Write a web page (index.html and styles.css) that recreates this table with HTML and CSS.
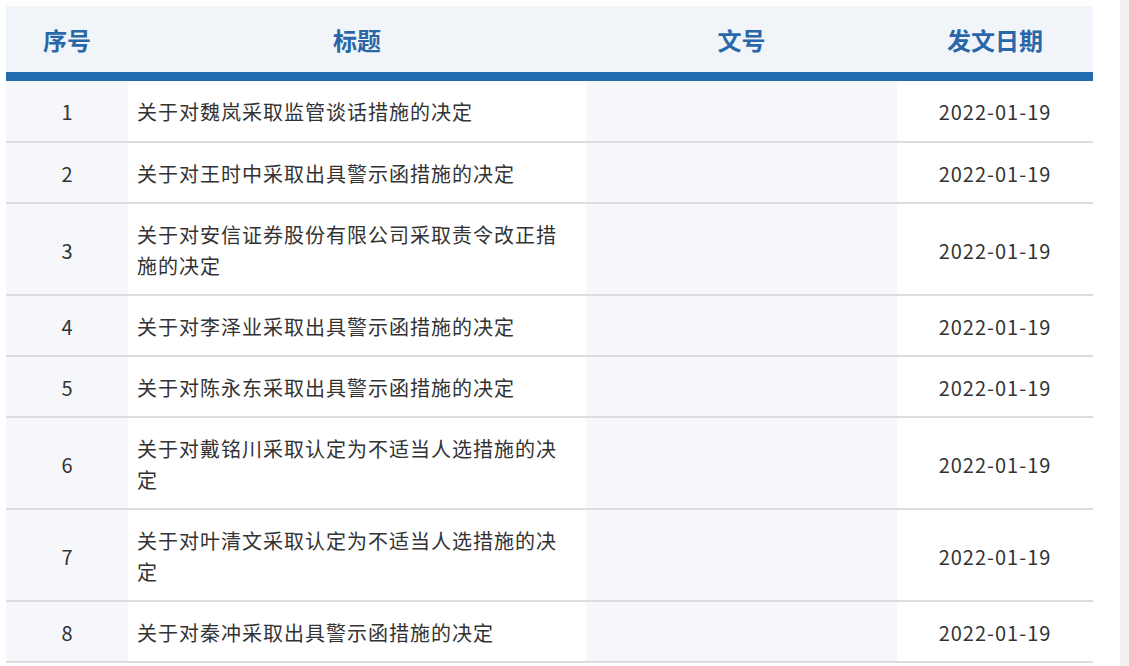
FILE: index.html
```html
<!DOCTYPE html>
<html lang="zh">
<head>
<meta charset="utf-8">
<link rel="stylesheet" href="styles.css">
</head>
<body>
<div class="page">
  <div class="main">
    <table class="list">
      <colgroup>
        <col class="c-no">
        <col class="c-title">
        <col class="c-doc">
        <col class="c-date">
      </colgroup>
      <thead>
        <tr><th>序号</th><th>标题</th><th>文号</th><th>发文日期</th></tr>
      </thead>
      <tbody>
        <tr><td class="no">1</td><td class="title">关于对魏岚采取监管谈话措施的决定</td><td class="doc"></td><td class="date">2022-01-19</td></tr>
        <tr><td class="no">2</td><td class="title">关于对王时中采取出具警示函措施的决定</td><td class="doc"></td><td class="date">2022-01-19</td></tr>
        <tr><td class="no">3</td><td class="title">关于对安信证券股份有限公司采取责令改正措施的决定</td><td class="doc"></td><td class="date">2022-01-19</td></tr>
        <tr><td class="no">4</td><td class="title">关于对李泽业采取出具警示函措施的决定</td><td class="doc"></td><td class="date">2022-01-19</td></tr>
        <tr><td class="no">5</td><td class="title">关于对陈永东采取出具警示函措施的决定</td><td class="doc"></td><td class="date">2022-01-19</td></tr>
        <tr><td class="no">6</td><td class="title">关于对戴铭川采取认定为不适当人选措施的决定</td><td class="doc"></td><td class="date">2022-01-19</td></tr>
        <tr><td class="no">7</td><td class="title">关于对叶清文采取认定为不适当人选措施的决定</td><td class="doc"></td><td class="date">2022-01-19</td></tr>
        <tr><td class="no">8</td><td class="title">关于对秦冲采取出具警示函措施的决定</td><td class="doc"></td><td class="date">2022-01-19</td></tr>
      </tbody>
    </table>
  </div>
  <div class="track"></div>
</div>
</body>
</html>
```
FILE: styles.css
```css
html, body {
  margin: 0;
  padding: 0;
  background: #fff;
  height: 100%;
  overflow: hidden;
}
body {
  font-family: "Noto Sans CJK SC", "Noto Sans", sans-serif;
  color: #333;
}
.page {
  display: flex;
  height: 666px;
}
.main {
  padding: 6px 0 0 6px;
  width: 1087px;
}
.track {
  margin-left: auto;
  width: 9px;
  background: #f1f1f1;
}
.list {
  width: 1087px;
  border-collapse: collapse;
  table-layout: fixed;
}
.c-no { width: 122px; }
.c-title { width: 458px; }
.c-doc { width: 311px; }
.c-date { width: 196px; }
thead th {
  background: #f1f5f9;
  color: #2a67a8;
  font-size: 24px;
  font-weight: bold;
  height: 66px;
  padding: 0;
  border-bottom: 9px solid #236bb0;
  text-align: center;
  vertical-align: middle;
}
tbody tr {
  border-bottom: 2px solid #dcdde0;
}
tbody tr:first-child td {
  padding-top: 15px;
  padding-bottom: 14px;
}
tbody td {
  padding: 15px 9px 13px;
  font-size: 20px;
  line-height: 31px;
  vertical-align: middle;
}
td.no {
  background: #f5f7fa;
  text-align: center;
}
td.title {
  background: #fff;
  text-align: left;
  letter-spacing: 1px;
}
td.doc {
  background: #f5f7fa;
}
td.date {
  text-align: center;
  letter-spacing: 1px;
}
```
